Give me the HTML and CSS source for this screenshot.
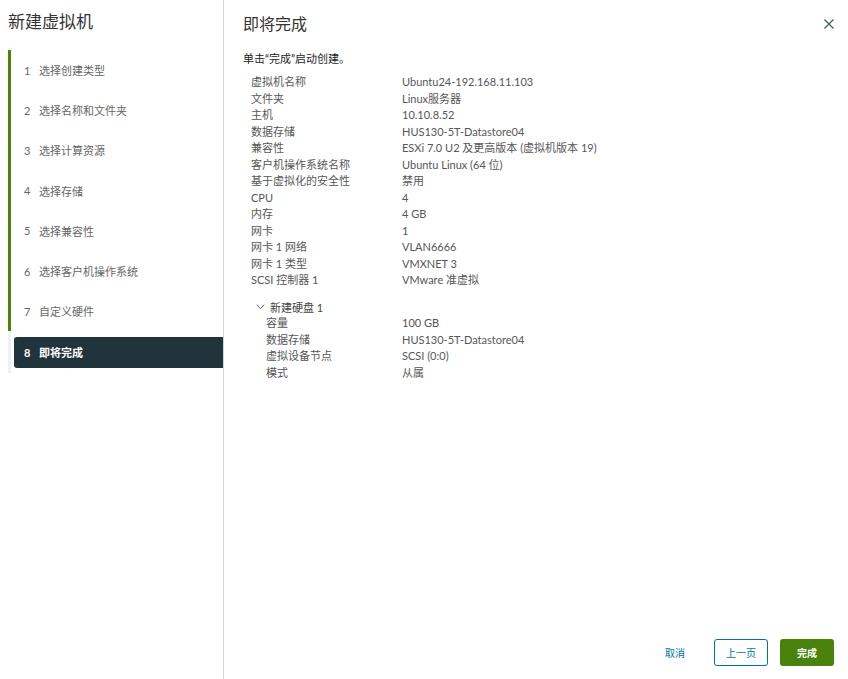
FILE: index.html
```html
<!DOCTYPE html>
<html lang="zh">
<head>
<meta charset="utf-8">
<link rel="stylesheet" href="styles.css">
</head>
<body>
<div class="wizard">
  <aside class="sidebar">
    <h1 class="wiz-title">新建虚拟机</h1>
    <div class="steps">
      <div class="done">
        <div class="step"><span class="num">1</span><span>选择创建类型</span></div>
        <div class="step"><span class="num">2</span><span>选择名称和文件夹</span></div>
        <div class="step"><span class="num">3</span><span>选择计算资源</span></div>
        <div class="step"><span class="num">4</span><span>选择存储</span></div>
        <div class="step"><span class="num">5</span><span>选择兼容性</span></div>
        <div class="step"><span class="num">6</span><span>选择客户机操作系统</span></div>
        <div class="step"><span class="num">7</span><span>自定义硬件</span></div>
      </div>
      <div class="current-wrap">
        <div class="step current"><span class="num">8</span><span>即将完成</span></div>
      </div>
    </div>
  </aside>
  <main class="content">
    <header class="head">
      <h2 class="page-title">即将完成</h2>
      <button class="close" aria-label="关闭">
        <svg width="12" height="12" viewBox="0 0 12 12"><path d="M1.5 1.5 L10.5 10.5 M10.5 1.5 L1.5 10.5" stroke="#4a5a64" stroke-width="1.3" fill="none"/></svg>
      </button>
    </header>
    <p class="intro">单击“完成”启动创建。</p>
    <div class="props">
      <div class="row"><span class="k">虚拟机名称</span><span class="v">Ubuntu24-192.168.11.103</span></div>
      <div class="row"><span class="k">文件夹</span><span class="v">Linux服务器</span></div>
      <div class="row"><span class="k">主机</span><span class="v">10.10.8.52</span></div>
      <div class="row"><span class="k">数据存储</span><span class="v">HUS130-5T-Datastore04</span></div>
      <div class="row"><span class="k">兼容性</span><span class="v">ESXi 7.0 U2 及更高版本 (虚拟机版本 19)</span></div>
      <div class="row"><span class="k">客户机操作系统名称</span><span class="v">Ubuntu Linux (64 位)</span></div>
      <div class="row"><span class="k">基于虚拟化的安全性</span><span class="v">禁用</span></div>
      <div class="row"><span class="k">CPU</span><span class="v">4</span></div>
      <div class="row"><span class="k">内存</span><span class="v">4 GB</span></div>
      <div class="row"><span class="k">网卡</span><span class="v">1</span></div>
      <div class="row"><span class="k">网卡 1 网络</span><span class="v">VLAN6666</span></div>
      <div class="row"><span class="k">网卡 1 类型</span><span class="v">VMXNET 3</span></div>
      <div class="row"><span class="k">SCSI 控制器 1</span><span class="v">VMware 准虚拟</span></div>
    </div>
    <div class="group">
      <div class="group-head">
        <svg class="chev" width="9" height="6" viewBox="0 0 9 6"><path d="M0.8 0.8 L4.5 4.6 L8.2 0.8" stroke="#555" stroke-width="1" fill="none"/></svg>
        <span>新建硬盘 1</span>
      </div>
      <div class="row sub"><span class="k">容量</span><span class="v">100 GB</span></div>
      <div class="row sub"><span class="k">数据存储</span><span class="v">HUS130-5T-Datastore04</span></div>
      <div class="row sub"><span class="k">虚拟设备节点</span><span class="v">SCSI (0:0)</span></div>
      <div class="row sub"><span class="k">模式</span><span class="v">从属</span></div>
    </div>
    <footer class="actions">
      <button class="btn link">取消</button>
      <button class="btn outline">上一页</button>
      <button class="btn primary">完成</button>
    </footer>
  </main>
</div>
</body>
</html>
```
FILE: styles.css
```css
* { box-sizing: border-box; }
html, body { margin: 0; padding: 0; background: #fff; }
body {
  font-family: "Lato", "Noto Sans CJK SC", sans-serif;
  color: #565656;
  width: 848px;
  height: 679px;
  overflow: hidden;
}
.wizard {
  display: flex;
  height: 679px;
}
.sidebar {
  width: 224px;
  flex: none;
  border-right: 1px solid #cfd6db;
  padding: 0 0 0 8px;
}
.wiz-title {
  margin: 0;
  padding-top: 10px;
  font-size: 17px;
  font-weight: 400;
  color: #333;
  line-height: 24px;
  height: 50px;
}
.steps { display: flex; flex-direction: column; }
.done {
  border-left: 3px solid #4d8400;
}
.step {
  display: flex;
  align-items: center;
  height: 40.2px;
  font-size: 11px;
  color: #666;
  padding-left: 13px;
}
.num { width: 15px; }
.current-wrap {
  border-left: 3px solid #eef2f5;
  padding: 5.5px 0 5px 3px;
}
.step.current {
  background: #21333b;
  color: #fff;
  font-weight: 700;
  height: 31px;
  border-radius: 3px 0 0 3px;
  padding-left: 10px;
}
.content {
  flex: 1;
  padding: 0 12px 0 19px;
  display: flex;
  flex-direction: column;
}
.head {
  display: flex;
  justify-content: space-between;
  align-items: center;
  height: 44px;
  padding-top: 1px;
}
.page-title {
  margin: 0;
  font-size: 16px;
  font-weight: 400;
  color: #333;
}
.close {
  border: 0;
  background: none;
  padding: 0;
  width: 12px;
  height: 12px;
  margin-right: 1px;
  margin-top: 2px;
  display: flex;
}
.intro {
  margin: 7px 0 0;
  font-size: 11px;
  color: #222;
  line-height: 16px;
}
.props { margin-top: 7px; padding-left: 8px; }
.row {
  display: flex;
  font-size: 11px;
  line-height: 16.5px;
  height: 16.5px;
  color: #565656;
}
.row .k { width: 151px; flex: none; }
.group { margin-top: 10px; padding-left: 13px; }
.group-head {
  display: flex;
  align-items: center;
  font-size: 11px;
  height: 16.5px;
  color: #444;
}
.chev { margin-right: 5px; }
.row.sub { padding-left: 10px; }
.row.sub .k { width: 136px; }
.actions {
  margin-top: auto;
  margin-bottom: 13px;
  margin-right: 2px;
  display: flex;
  justify-content: flex-end;
  gap: 12px;
}
.btn {
  font-family: "Lato", "Noto Sans CJK SC", sans-serif;
  font-size: 10px;
  height: 27px;
  min-width: 54px;
  border-radius: 3px;
  padding: 0 10px;
  cursor: pointer;
}
.btn.link {
  border: 0;
  background: #fff;
  color: #0072a3;
  min-width: 40px;
  padding: 0 10px;
  margin-right: 7px;
}
.btn.outline {
  border: 1px solid #0072a3;
  background: #fff;
  color: #0072a3;
}
.btn.primary {
  border: 0;
  background: #4a830b;
  color: #fff;
  font-weight: 700;
}
```
